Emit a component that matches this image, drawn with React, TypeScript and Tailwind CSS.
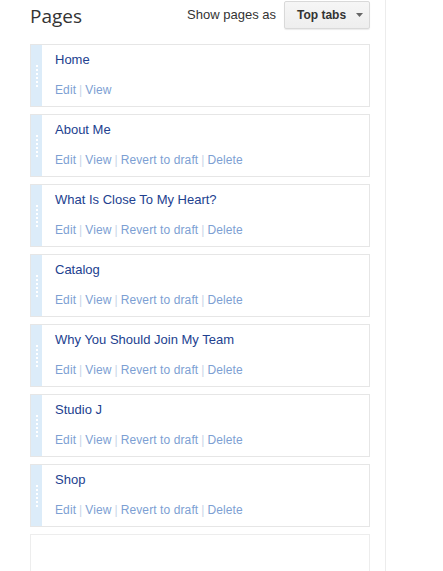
import React from "react";

const pages = [
  { title: "Home", full: false },
  { title: "About Me", full: true },
  { title: "What Is Close To My Heart?", full: true },
  { title: "Catalog", full: true },
  { title: "Why You Should Join My Team", full: true },
  { title: "Studio J", full: true },
  { title: "Shop", full: true },
];

function Sep() {
  return <span className="text-[#c9d6e8] mx-[3px]">|</span>;
}

function PageCard({ title, full }: { title: string; full: boolean }) {
  const links = full ? ["Edit", "View", "Revert to draft", "Delete"] : ["Edit", "View"];
  return (
    <div className="flex h-[63px] border border-[#e6e6e6] bg-white">
      {/* drag handle */}
      <div className="w-[11px] bg-[#dcecf9] flex items-center justify-center">
        <div className="flex flex-col gap-[2px]">
          {[0, 1, 2, 3, 4, 5].map((i) => (
            <span key={i} className="block w-[2px] h-[2px] bg-white" />
          ))}
        </div>
      </div>
      <div className="pl-[13px] pt-[6px] flex flex-col">
        <div className="text-[13px] leading-[17px] text-[#22418f]">{title}</div>
        <div className="mt-[14px] text-[12px] leading-[17px] tracking-[0.1px] text-[#7d9fd3]">
          {links.map((l, i) => (
            <React.Fragment key={l}>
              {i > 0 && <Sep />}
              <span>{l}</span>
            </React.Fragment>
          ))}
        </div>
      </div>
    </div>
  );
}

export default function App() {
  return (
    <div className="w-[443px] h-[571px] overflow-hidden bg-white flex font-['Liberation_Sans',Arial,sans-serif]">
      <div className="pl-[30px] w-[370px] shrink-0">
        {/* Header */}
        <div className="h-[44px] flex items-start justify-between">
          <h1 className="pt-[4px] text-[19px] leading-[24px] text-[#333] font-['Open_Sans',sans-serif]">Pages</h1>
          <div className="flex items-center pt-[1px]">
            <span className="text-[13px] text-[#333] mr-[8px]">Show pages as</span>
            <button className="h-[28px] w-[86px] border border-[#d9d9d9] rounded-[2px] bg-gradient-to-b from-[#f6f6f6] to-[#eeeeee] shadow-[0_1px_1px_rgba(0,0,0,0.08)] flex items-center pl-[12px] text-[12px] font-bold text-[#333]">
              Top tabs
              <svg width="8" height="4" viewBox="0 0 8 4" className="ml-[10px]">
                <path d="M0 0h7L3.5 4z" fill="#666" />
              </svg>
            </button>
          </div>
        </div>
        {/* Cards */}
        <div className="flex flex-col gap-[7px]">
          {pages.map((p) => (
            <PageCard key={p.title} title={p.title} full={p.full} />
          ))}
          <div className="h-[60px] border border-[#ededed] bg-white" />
        </div>
      </div>
      <div className="w-[15px]" />
      <div className="border-l border-[#ececec] h-full" />
    </div>
  );
}
